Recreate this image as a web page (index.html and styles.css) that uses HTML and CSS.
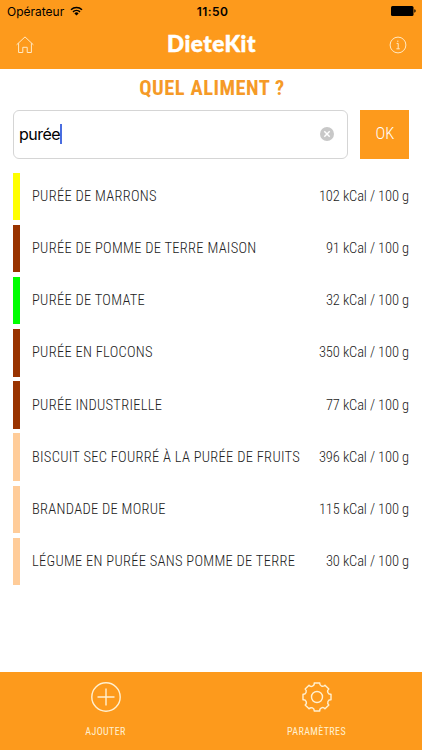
FILE: index.html
```html
<!DOCTYPE html>
<html lang="fr">
<head>
  <meta charset="UTF-8">
  <meta name="viewport" content="width=device-width, initial-scale=1.0">
  <title>DieteKit</title>
  <link rel="stylesheet" href="styles.css">
</head>
<body>
  <header class="header">
    <div class="status">
      <div class="carrier">
        <span>Opérateur</span>
        <svg class="wifi" viewBox="0 0 13 10" width="13" height="10">
          <path d="M1 3.7a8 8 0 0 1 11 0M3 5.9a5 5 0 0 1 7 0" fill="none" stroke="#000" stroke-width="1.5"/>
          <path d="M6.5 9.6L4.4 7.4a3 3 0 0 1 4.2 0z"/>
        </svg>
      </div>
      <div class="time">11:50</div>
      <svg class="battery" viewBox="0 0 25 10" width="25" height="10">
        <rect width="22.5" height="10" rx="1.5"/>
        <path d="M23.3 3.3q1.4.3 1.4 1.7t-1.4 1.7z"/>
      </svg>
    </div>
    <div class="navbar">
      <svg class="nav-icon" viewBox="0 0 18 18" width="18" height="18">
        <path d="M.6 8.8L9 .9l8.4 7.9M2.6 7.2v9.3h4.2v-5.2h4.4v5.2h4.2V7.2"/>
      </svg>
      <h1 class="logo">DieteKit</h1>
      <svg class="nav-icon" viewBox="0 0 18 18" width="18" height="18">
        <circle cx="9" cy="9" r="7.9"/>
        <path d="M7.6 7.4h1.6v5.4M7.4 12.8h3.4M8.8 4.6v1.3"/>
      </svg>
    </div>
  </header>

  <main class="content">
    <h2 class="title">QUEL ALIMENT ?</h2>
    <div class="search">
      <div class="field">
        <span class="value">purée</span>
        <svg class="clear" viewBox="0 0 14 14" width="14" height="14">
          <circle cx="7" cy="7" r="7" fill="#c8c8c8"/>
          <path d="M4.3 4.3l5.4 5.4M9.7 4.3L4.3 9.7" stroke="#fff" stroke-width="1.5"/>
        </svg>
      </div>
      <button class="ok">OK</button>
    </div>

    <ul class="foods">
      <li class="food yellow"><span class="name">PURÉE DE MARRONS</span><span class="kcal">102 kCal / 100 g</span></li>
      <li class="food brown"><span class="name">PURÉE DE POMME DE TERRE MAISON</span><span class="kcal">91 kCal / 100 g</span></li>
      <li class="food green"><span class="name">PURÉE DE TOMATE</span><span class="kcal">32 kCal / 100 g</span></li>
      <li class="food brown"><span class="name">PURÉE EN FLOCONS</span><span class="kcal">350 kCal / 100 g</span></li>
      <li class="food brown"><span class="name">PURÉE INDUSTRIELLE</span><span class="kcal">77 kCal / 100 g</span></li>
      <li class="food peach"><span class="name">BISCUIT SEC FOURRÉ À LA PURÉE DE FRUITS</span><span class="kcal">396 kCal / 100 g</span></li>
      <li class="food peach"><span class="name">BRANDADE DE MORUE</span><span class="kcal">115 kCal / 100 g</span></li>
      <li class="food peach"><span class="name">LÉGUME EN PURÉE SANS POMME DE TERRE</span><span class="kcal">30 kCal / 100 g</span></li>
    </ul>
  </main>

  <footer class="tabs">
    <div class="tab">
      <svg class="tab-icon" viewBox="0 0 30 30" width="30" height="30">
        <circle cx="15" cy="15" r="14.2"/>
        <path d="M15 6.5v17M6.5 15h17"/>
      </svg>
      <span class="tab-label">AJOUTER</span>
    </div>
    <div class="tab">
      <svg class="tab-icon" viewBox="0 0 30 30" width="30" height="30">
        <circle cx="15" cy="15" r="5.5"/>
        <path transform="rotate(22.5 15 15)" d="M12.2 1A2.9 2.9 0 0 0 17.8 1L22.9 3.1A2.9 2.9 0 0 0 26.9 7.1L29 12.2A2.9 2.9 0 0 0 29 17.8L26.9 22.9A2.9 2.9 0 0 0 22.9 26.9L17.8 29A2.9 2.9 0 0 0 12.2 29L7.1 26.9A2.9 2.9 0 0 0 3.1 22.9L1 17.8A2.9 2.9 0 0 0 1 12.2L3.1 7.1A2.9 2.9 0 0 0 7.1 3.1z"/>
      </svg>
      <span class="tab-label">PARAMÈTRES</span>
    </div>
  </footer>
</body>
</html>
```
FILE: styles.css
```css
* {
  box-sizing: border-box;
}

body {
  margin: 0;
  height: 750px;
  display: flex;
  flex-direction: column;
  background: #fff;
  font-family: "Roboto Condensed", Roboto, sans-serif;
  font-stretch: 75%;
  overflow: hidden;
}

.header {
  height: 69px;
  background: #fd9a1c;
}

.status {
  height: 22px;
  padding: 0 6px 0 7px;
  display: grid;
  grid-template-columns: 1fr auto 1fr;
  align-items: center;
  font-family: Inter, sans-serif;
  font-stretch: 100%;
  font-size: 12px;
}

.carrier {
  display: flex;
  align-items: center;
  gap: 6px;
}

.time {
  padding-left: 2px;
  font-weight: 600;
  letter-spacing: 0.4px;
}

.battery {
  justify-self: end;
}

.navbar {
  height: 47px;
  padding: 0 15px 2px 16px;
  display: flex;
  align-items: center;
  justify-content: space-between;
}

.nav-icon {
  fill: none;
  stroke: #ffe9c4;
  stroke-width: 1;
}

.logo {
  margin: 0 0 2px;
  color: #fff;
  font-family: Lato, sans-serif;
  font-stretch: 100%;
  font-size: 22.5px;
  font-weight: 900;
  letter-spacing: 0.5px;
  -webkit-text-stroke: 0.5px #fff;
}

.content {
  flex: 1;
  padding: 0 13px;
}

.title {
  margin: 0;
  height: 41px;
  padding-left: 2px;
  line-height: 39px;
  text-align: center;
  color: #f59a27;
  font-size: 20.5px;
  font-weight: 700;
  letter-spacing: 0.5px;
}

.search {
  display: flex;
  gap: 12px;
}

.field {
  flex: 1;
  height: 49px;
  padding: 0 13px 2px 5px;
  display: flex;
  align-items: center;
  border: 1px solid #d5d5d5;
  border-radius: 6px;
}

.value {
  border-right: 2px solid #4a6de0;
  font-family: Inter, sans-serif;
  font-stretch: 100%;
  font-size: 16px;
  line-height: 20px;
  letter-spacing: -0.5px;
}

.clear {
  margin-left: auto;
}

.ok {
  width: 49px;
  height: 49px;
  padding: 0 0 2px 1px;
  border: none;
  background: #fd9a1c;
  color: #fff;
  font-family: inherit;
  font-stretch: inherit;
  font-size: 16.5px;
  font-weight: 350;
}

.foods {
  margin: 13.5px 0 0;
  padding: 0;
  list-style: none;
  display: grid;
  gap: 4.7px;
}

.food {
  height: 47.5px;
  padding-left: 12px;
  display: flex;
  align-items: center;
  justify-content: space-between;
  border-left: 7px solid;
  font-size: 14.5px;
  font-weight: 300;
}

.name,
.kcal {
  color: #222;
}

.name {
  letter-spacing: 0.28px;
}

.kcal {
  letter-spacing: -0.12px;
}

.yellow {
  border-color: #ffff00;
}

.brown {
  border-color: #993300;
}

.green {
  border-color: #00ff00;
}

.peach {
  border-color: #ffcc99;
}

.tabs {
  height: 78px;
  display: flex;
  background: #fd9a1c;
}

.tab {
  flex: 1;
  padding-top: 10px;
  display: flex;
  flex-direction: column;
  align-items: center;
  gap: 13px;
}

.tab-icon {
  fill: none;
  stroke: #fff0d0;
  stroke-width: 1.4;
  stroke-linejoin: round;
}

.tab-label {
  color: #fff0d0;
  font-size: 10px;
  line-height: 14px;
  letter-spacing: 0.4px;
}
```
